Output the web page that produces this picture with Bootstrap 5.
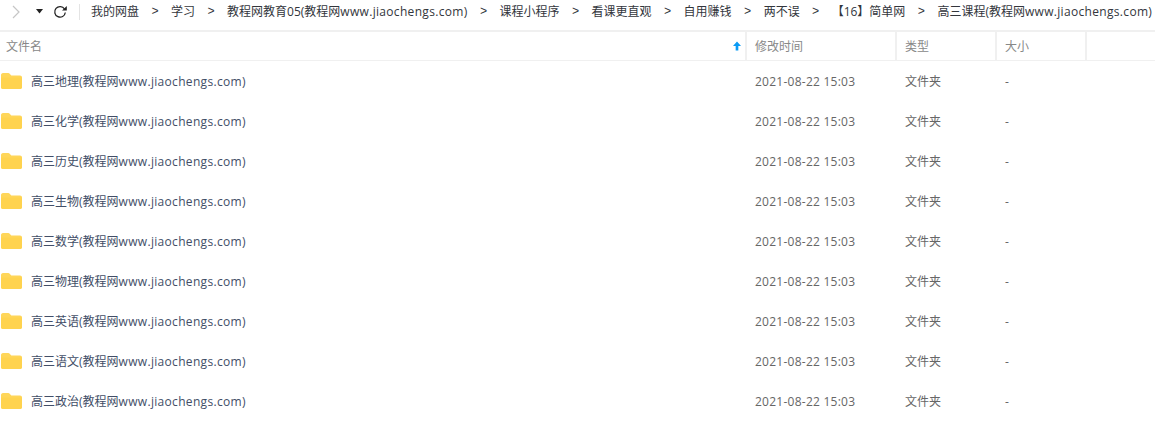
<!DOCTYPE html>
<html lang="zh-CN">
<head>
  <meta charset="UTF-8" />
  <title>文件列表</title>
  <link href="https://cdn.jsdelivr.net/npm/bootstrap@5.3.3/dist/css/bootstrap.min.css" rel="stylesheet">
  <style>
    body { font-family: "Open Sans", "Noto Sans CJK SC", sans-serif; font-size: 12px; color: #424e67; background: #fff; overflow: hidden; }
    .crumb-bar { height: 32px; padding-bottom: 7px; border-bottom: 2px solid #f0f0f0; color: #33363c; white-space: nowrap; }
    .nav-btns { width: 91px; flex: none; }
    .nav-forward { margin-left: 11px; }
    .nav-drop { margin-left: 14px; }
    .nav-refresh { margin-left: 10px; }
    .nav-rule { width: 1px; height: 16px; background: #e4e4e4; margin-left: 12px; }
    .crumb-sep { font-family: "Liberation Mono", monospace; width: 32px; text-align: center; flex: none; }
    .latin { letter-spacing: .32px; }
    .stamp { letter-spacing: .25px; }
    .head-row { height: 29px; border-bottom: 1px solid #f0f0f0; color: #888; }
    .col-name { width: 747px; flex: none; padding-left: 6px; }
    .col-time { width: 150px; flex: none; padding-left: 8px; }
    .col-kind { width: 100px; flex: none; padding-left: 8px; }
    .col-size { width: 90px; flex: none; padding-left: 8px; }
    .head-row > div { height: 100%; padding-top: 2px; display: flex; align-items: center; border-right: 2px solid #f0f0f0; }
    .head-row > .col-rest { border-right: 0; }
    .head-row svg { margin-bottom: 2px; }
    .file-row { height: 40px; color: #666; }
    .file-row .col-name { padding-left: 1px; color: #424e67; gap: 9px; }
    .file-row > div { padding-top: 2px; display: flex; align-items: center; }
    .file-row svg { margin-bottom: 2px; }
  </style>
</head>
<body>
  <svg width="0" height="0" class="d-block">
    <symbol id="folder" viewBox="0 0 21 16">
      <path d="M0 2.2C0 1 .8 0 2 0h5.2c.8 0 1.2.3 1.7.9L10.300 2.600H19c1.200 0 2 .8 2 2V14c0 1.200-.8 2-2 2H2c-1.200 0-2-.8-2-2z" fill="#ffd659"/>
      <path d="M0 4.500h21V14c0 1.200-.8 2-2 2H2c-1.200 0-2-.8-2-2z" fill="#ffd34f"/>
    </symbol>
  </svg>

  <div class="crumb-bar d-flex align-items-center">
    <div class="nav-btns d-flex align-items-center">
      <svg class="nav-forward" width="11" height="14" viewBox="0 0 11 14"><path d="M2 1l6 6-6 6" fill="none" stroke="#c6c6c6" stroke-width="1.200"/></svg>
      <svg class="nav-drop" width="7" height="5" viewBox="0 0 7 5"><path d="M0 0h7L3.500 4.500z" fill="#222"/></svg>
      <svg class="nav-refresh" width="14" height="14" viewBox="0 0 14 14"><path d="M11.500 4A5.300 5.300 0 1 0 12.300 7.500" fill="none" stroke="#222" stroke-width="1.300"/><path d="M9 5.500h4.800V1z" fill="#222"/></svg>
      <div class="nav-rule"></div>
    </div>
    <span>我的网盘</span><span class="crumb-sep">&gt;</span>
    <span>学习</span><span class="crumb-sep">&gt;</span>
    <span>教程网教育05(教程网<span class="latin">www.jiaochengs.com)</span></span><span class="crumb-sep">&gt;</span>
    <span>课程小程序</span><span class="crumb-sep">&gt;</span>
    <span>看课更直观</span><span class="crumb-sep">&gt;</span>
    <span>自用赚钱</span><span class="crumb-sep">&gt;</span>
    <span>两不误</span><span class="crumb-sep">&gt;</span>
    <span>【16】简单网</span><span class="crumb-sep">&gt;</span>
    <span>高三课程(教程网<span class="latin">www.jiaochengs.com)</span></span>
  </div>

  <div class="head-row d-flex">
    <div class="col-name justify-content-between">
      <span>文件名</span>
      <svg class="me-1" width="8" height="10" viewBox="0 0 9 10"><path d="M4.500 0L9 5H6v5H3V5H0z" fill="#0a9bf5"/></svg>
    </div>
    <div class="col-time">修改时间</div>
    <div class="col-kind">类型</div>
    <div class="col-size">大小</div>
    <div class="col-rest flex-grow-1"></div>
  </div>

  <div class="file-row d-flex"><div class="col-name"><svg width="21" height="16"><use href="#folder"/></svg><span>高三地理(教程网<span class="latin">www.jiaochengs.com)</span></span></div><div class="col-time stamp">2021-08-22 15:03</div><div class="col-kind">文件夹</div><div class="col-size">-</div></div>
  <div class="file-row d-flex"><div class="col-name"><svg width="21" height="16"><use href="#folder"/></svg><span>高三化学(教程网<span class="latin">www.jiaochengs.com)</span></span></div><div class="col-time stamp">2021-08-22 15:03</div><div class="col-kind">文件夹</div><div class="col-size">-</div></div>
  <div class="file-row d-flex"><div class="col-name"><svg width="21" height="16"><use href="#folder"/></svg><span>高三历史(教程网<span class="latin">www.jiaochengs.com)</span></span></div><div class="col-time stamp">2021-08-22 15:03</div><div class="col-kind">文件夹</div><div class="col-size">-</div></div>
  <div class="file-row d-flex"><div class="col-name"><svg width="21" height="16"><use href="#folder"/></svg><span>高三生物(教程网<span class="latin">www.jiaochengs.com)</span></span></div><div class="col-time stamp">2021-08-22 15:03</div><div class="col-kind">文件夹</div><div class="col-size">-</div></div>
  <div class="file-row d-flex"><div class="col-name"><svg width="21" height="16"><use href="#folder"/></svg><span>高三数学(教程网<span class="latin">www.jiaochengs.com)</span></span></div><div class="col-time stamp">2021-08-22 15:03</div><div class="col-kind">文件夹</div><div class="col-size">-</div></div>
  <div class="file-row d-flex"><div class="col-name"><svg width="21" height="16"><use href="#folder"/></svg><span>高三物理(教程网<span class="latin">www.jiaochengs.com)</span></span></div><div class="col-time stamp">2021-08-22 15:03</div><div class="col-kind">文件夹</div><div class="col-size">-</div></div>
  <div class="file-row d-flex"><div class="col-name"><svg width="21" height="16"><use href="#folder"/></svg><span>高三英语(教程网<span class="latin">www.jiaochengs.com)</span></span></div><div class="col-time stamp">2021-08-22 15:03</div><div class="col-kind">文件夹</div><div class="col-size">-</div></div>
  <div class="file-row d-flex"><div class="col-name"><svg width="21" height="16"><use href="#folder"/></svg><span>高三语文(教程网<span class="latin">www.jiaochengs.com)</span></span></div><div class="col-time stamp">2021-08-22 15:03</div><div class="col-kind">文件夹</div><div class="col-size">-</div></div>
  <div class="file-row d-flex"><div class="col-name"><svg width="21" height="16"><use href="#folder"/></svg><span>高三政治(教程网<span class="latin">www.jiaochengs.com)</span></span></div><div class="col-time stamp">2021-08-22 15:03</div><div class="col-kind">文件夹</div><div class="col-size">-</div></div>

  <script src="https://cdn.jsdelivr.net/npm/bootstrap@5.3.3/dist/js/bootstrap.bundle.min.js"></script>
</body>
</html>
